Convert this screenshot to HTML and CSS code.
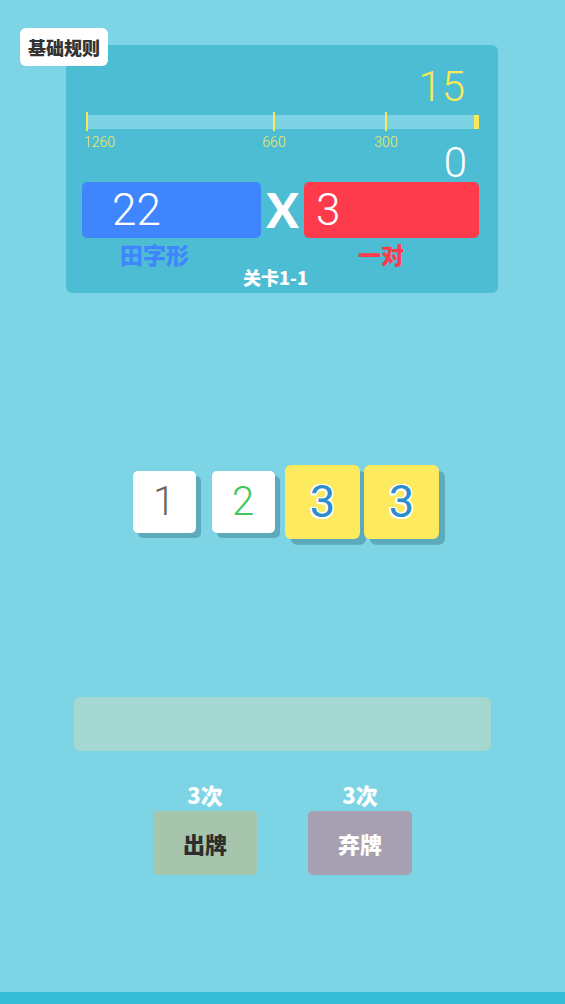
FILE: index.html
```html
<!DOCTYPE html>
<html lang="zh">
<head>
<meta charset="utf-8">
<title>关卡1-1</title>
<link rel="stylesheet" href="styles.css">
</head>
<body>
<div class="screen">
  <div class="top">
    <button class="rules">基础规则</button>
    <section class="panel">
      <div class="goal">15</div>
      <div class="track">
        <div class="bar">
          <i class="tick" style="left:0px"></i>
          <i class="tick" style="left:187px"></i>
          <i class="tick" style="left:299px"></i>
          <i class="end"></i>
        </div>
        <div class="labels">
          <span class="lab first" style="left:-2px">1260</span>
          <span class="lab" style="left:188px">660</span>
          <span class="lab" style="left:300px">300</span>
        </div>
      </div>
      <div class="score">0</div>
      <div class="calc">
        <div class="chips">22</div>
        <div class="x">X</div>
        <div class="mult">3</div>
      </div>
      <div class="types">
        <span class="t-blue">田字形</span>
        <span class="t-red">一对</span>
      </div>
      <div class="level">关卡1-1</div>
    </section>
  </div>

  <div class="hand">
    <div class="card"><span class="n1">1</span></div>
    <div class="card"><span class="n2">2</span></div>
    <div class="card sel"><span class="n3">3</span></div>
    <div class="card sel"><span class="n3">3</span></div>
  </div>

  <div class="slot"></div>

  <div class="actions">
    <div class="act">
      <div class="count">3次</div>
      <button class="btn play">出牌</button>
    </div>
    <div class="act">
      <div class="count">3次</div>
      <button class="btn discard">弃牌</button>
    </div>
  </div>

  <div class="bottom"></div>
</div>
</body>
</html>
```

FILE: styles.css
```css
* { box-sizing: border-box; }
html, body { margin: 0; padding: 0; }
body {
  background: #7dd4e5;
  font-family: "Noto Sans CJK SC", "Noto Sans", sans-serif;
}
.screen {
  width: 565px;
  height: 1004px;
  display: flex;
  flex-direction: column;
  overflow: hidden;
}
.top {
  position: relative;
  padding-top: 45px;
  padding-left: 66px;
}
.rules {
  position: absolute;
  left: 20px;
  top: 28px;
  width: 88px;
  height: 38px;
  border: 0;
  border-radius: 6px;
  background: #ffffff;
  color: #333333;
  font-family: "Noto Sans CJK SC", sans-serif;
  font-weight: 900;
  font-size: 18px;
  padding: 0;
  line-height: 38px;
  z-index: 2;
}
.panel {
  width: 432px;
  height: 248px;
  background: #4dbdd4;
  border-radius: 6px;
  padding: 19px 19px 0 16px;
  display: flex;
  flex-direction: column;
}
.goal {
  font-family: "Roboto", sans-serif;
  font-weight: 300;
  font-size: 42px;
  line-height: 46px;
  height: 46px;
  color: #f9e858;
  text-align: right;
  padding-right: 14px;
}
.track {
  margin-top: 5px;
  padding-left: 4px;
}
.bar {
  position: relative;
  width: 393px;
  height: 14px;
  background: #7dd3e4;
}
.tick {
  position: absolute;
  top: -3px;
  width: 2px;
  height: 19px;
  background: #f9e858;
}
.end {
  position: absolute;
  right: 0;
  top: 0;
  width: 5px;
  height: 14px;
  background: #f9e858;
}
.labels {
  position: relative;
  height: 14px;
  margin-top: 6px;
}
.lab {
  position: absolute;
  top: 0;
  transform: translateX(-50%);
  font-family: "Roboto", sans-serif;
  font-weight: 300;
  font-size: 14px;
  line-height: 14px;
  color: #f9e858;
}
.lab.first { transform: none; }
.score {
  margin-top: -8px;
  font-family: "Roboto", sans-serif;
  font-weight: 300;
  font-size: 42px;
  line-height: 44px;
  height: 44px;
  color: #ffffff;
  text-align: right;
  padding-right: 12px;
}
.calc {
  margin-top: -3px;
  display: flex;
  height: 56px;
}
.chips, .mult {
  height: 56px;
  border-radius: 5px;
  font-family: "Roboto", sans-serif;
  font-weight: 300;
  font-size: 44px;
  line-height: 56px;
  color: #ffffff;
}
.chips {
  width: 179px;
  background: #3f86fe;
  padding-left: 30px;
}
.mult {
  width: 175px;
  background: #fe3b4d;
  padding-left: 12px;
}
.x {
  width: 43px;
  text-align: center;
  font-family: "Lato", sans-serif;
  font-weight: 900;
  font-size: 48px;
  line-height: 56px;
  color: #ffffff;
}
.types {
  margin-top: 4px;
  display: flex;
  height: 24px;
  padding-left: 38px;
  gap: 169px;
  font-weight: 900;
  font-size: 23px;
  line-height: 24px;
}
.t-blue { color: #3f86fe; }
.t-red { color: #fe3b4d; }
.level {
  height: 22px;
  text-align: center;
  padding-right: 10px;
  font-weight: 900;
  font-size: 18px;
  line-height: 22px;
  color: #ffffff;
}
.hand {
  margin-top: 178px;
  display: flex;
  justify-content: center;
  gap: 16px;
  height: 62px;
}
.card {
  width: 63px;
  height: 62px;
  border-radius: 5px;
  background: #ffffff;
  box-shadow: 5px 5px 0 #5eaabd;
  display: flex;
  align-items: center;
  justify-content: center;
  font-family: "Roboto", sans-serif;
  font-weight: 300;
  font-size: 40px;
  line-height: 1;
}
.card.sel {
  background: #feea5e;
  transform: scale(1.19);
}
.n1 { color: #666666; }
.n2 { color: #3dc85a; }
.n3 {
  color: #2d8ec9;
  font-weight: 400;
  font-size: 38px;
  text-shadow:
    1.5px 0 0 #fff, -1.5px 0 0 #fff, 0 1.5px 0 #fff, 0 -1.5px 0 #fff,
    1px 1px 0 #fff, -1px -1px 0 #fff, 1px -1px 0 #fff, -1px 1px 0 #fff;
}
.slot {
  margin: 164px auto 0;
  width: 417px;
  height: 54px;
  border-radius: 6px;
  background: #a6d8d2;
}
.actions {
  margin-top: 30px;
  display: flex;
  justify-content: center;
  gap: 51px;
}
.act {
  width: 104px;
  display: flex;
  flex-direction: column;
  align-items: center;
}
.count {
  height: 26px;
  font-weight: 900;
  font-size: 22px;
  line-height: 26px;
  color: #ffffff;
}
.btn {
  margin-top: 4px;
  width: 104px;
  height: 64px;
  border: 0;
  border-radius: 5px;
  padding: 0;
  font-family: "Noto Sans CJK SC", sans-serif;
  font-weight: 900;
  font-size: 22px;
}
.play { background: #a7c5ad; color: #2e2e2e; }
.discard { background: #a7a0b0; color: #ffffff; }
.bottom {
  margin-top: auto;
  height: 12px;
  background: #36bdd6;
}
```
